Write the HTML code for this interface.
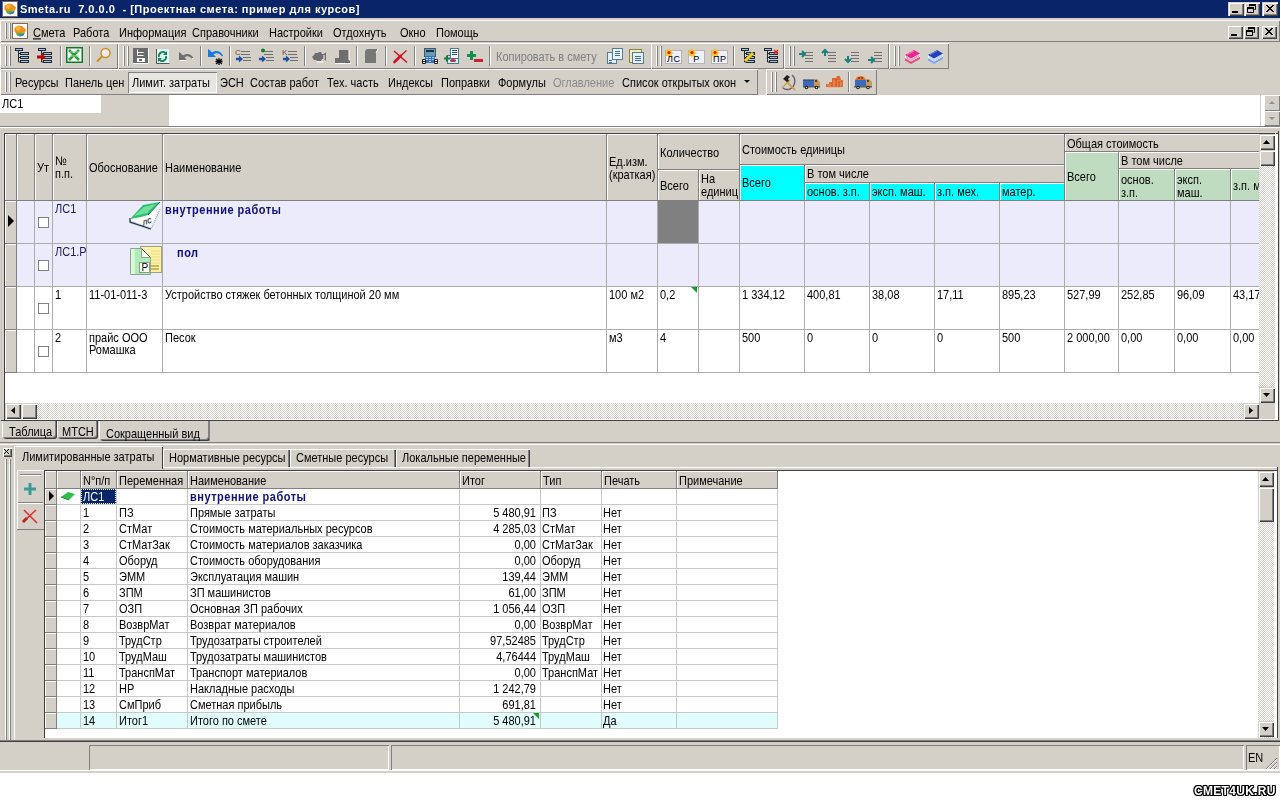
<!DOCTYPE html>
<html><head><meta charset="utf-8"><style>
html,body{margin:0;padding:0;width:1281px;height:801px;overflow:hidden;background:#fff}
body>div{position:absolute}
.t{white-space:nowrap;font:11px "Liberation Sans",sans-serif;color:#000;line-height:13px;transform-origin:0 0;transform:scaleY(1.12);will-change:transform}
svg{display:block}
</style></head><body>
<div style="left:0px;top:0px;width:1280px;height:773px;background:#D4D0C8"></div>
<div style="left:0px;top:0px;width:1280px;height:18px;background:#0A246A"></div>
<div class="t" style="left:20px;top:3px;color:#fff;font-weight:bold;font-size:11px;letter-spacing:0.5px;line-height:13px;transform:none">Smeta.ru&nbsp; 7.0.0.0&nbsp; - [Проектная смета: пример для курсов]</div>
<div style="left:2px;top:1px;width:16px;height:16px;"><svg width="16" height="16" viewBox="0 0 16 16"><rect x="0.5" y="0.5" width="15" height="15" fill="#fff" stroke="#806858"/><path d="M2.5 5L6 2.5L10 3L14 6.5L13 9.5L4 10.5L2.5 8z" fill="#f09018"/><path d="M4 4L7 3L9 5L7 8L4 7z" fill="#f8b040"/><path d="M4 10L13 9.5L12 12L8 13.5L5 12.5z" fill="#58b048"/><path d="M7 12L12 10.5L11.5 12.5L8 13.5z" fill="#4870c8"/></svg></div>
<div style="left:1228px;top:2px;width:16px;height:14px;background:#D4D0C8;box-shadow:inset 1px 1px 0 #D4D0C8, inset 2px 2px 0 #fff, inset -1px -1px 0 #404040, inset -2px -2px 0 #808080;"><svg width="16" height="14"><rect x="4" y="9" width="6" height="2" fill="#000"/></svg></div>
<div style="left:1244px;top:2px;width:16px;height:14px;background:#D4D0C8;box-shadow:inset 1px 1px 0 #D4D0C8, inset 2px 2px 0 #fff, inset -1px -1px 0 #404040, inset -2px -2px 0 #808080;"><svg width="16" height="14"><path d="M5.5 2.5h6v5h-1M5.5 2.5v2M3.5 5.5h6v5h-6z" fill="none" stroke="#000"/><rect x="5" y="2" width="7" height="2" fill="#000"/><rect x="3" y="5" width="7" height="2" fill="#000"/></svg></div>
<div style="left:1262px;top:2px;width:16px;height:14px;background:#D4D0C8;box-shadow:inset 1px 1px 0 #D4D0C8, inset 2px 2px 0 #fff, inset -1px -1px 0 #404040, inset -2px -2px 0 #808080;"><svg width="16" height="14"><path d="M4 3L11 10M11 3L4 10M5 3L12 10M12 3L5 10" stroke="#000" stroke-width="1"/></svg></div>
<div style="left:0px;top:18px;width:1280px;height:1px;background:#D4D0C8"></div>
<div style="left:0px;top:20px;width:1280px;height:22px;background:#D4D0C8;box-shadow:inset 1px 1px 0 #fff, inset -1px -1px 0 #808080;"></div>
<div style="left:5px;top:23px;width:1px;height:16px;background:#fff"></div>
<div style="left:6px;top:23px;width:1px;height:16px;background:#808080"></div>
<div style="left:9px;top:23px;width:1px;height:16px;background:#fff"></div>
<div style="left:10px;top:23px;width:1px;height:16px;background:#808080"></div>
<div style="left:12px;top:23px;width:16px;height:16px;"><svg width="16" height="16" viewBox="0 0 16 16"><rect x="0.5" y="0.5" width="15" height="15" fill="#fff" stroke="#806858"/><path d="M2.5 5L6 2.5L10 3L14 6.5L13 9.5L4 10.5L2.5 8z" fill="#f09018"/><path d="M4 4L7 3L9 5L7 8L4 7z" fill="#f8b040"/><path d="M4 10L13 9.5L12 12L8 13.5L5 12.5z" fill="#58b048"/><path d="M7 12L12 10.5L11.5 12.5L8 13.5z" fill="#4870c8"/></svg></div>
<div class="t" style="left:33px;top:26px;"><u>С</u>мета</div>
<div class="t" style="left:73px;top:26px;">Работа</div>
<div class="t" style="left:119px;top:26px;">Информация</div>
<div class="t" style="left:192px;top:26px;">Справочники</div>
<div class="t" style="left:269px;top:26px;">Настройки</div>
<div class="t" style="left:333px;top:26px;">Отдохнуть</div>
<div class="t" style="left:400px;top:26px;">Окно</div>
<div class="t" style="left:436px;top:26px;">Помощь</div>
<div style="left:1227px;top:25px;width:16px;height:14px;background:#D4D0C8;box-shadow:inset 1px 1px 0 #D4D0C8, inset 2px 2px 0 #fff, inset -1px -1px 0 #404040, inset -2px -2px 0 #808080;"><svg width="16" height="14"><rect x="4" y="9" width="6" height="2" fill="#000"/></svg></div>
<div style="left:1243px;top:25px;width:16px;height:14px;background:#D4D0C8;box-shadow:inset 1px 1px 0 #D4D0C8, inset 2px 2px 0 #fff, inset -1px -1px 0 #404040, inset -2px -2px 0 #808080;"><svg width="16" height="14"><path d="M5.5 2.5h6v5h-1M5.5 2.5v2M3.5 5.5h6v5h-6z" fill="none" stroke="#000"/><rect x="5" y="2" width="7" height="2" fill="#000"/><rect x="3" y="5" width="7" height="2" fill="#000"/></svg></div>
<div style="left:1261px;top:25px;width:16px;height:14px;background:#D4D0C8;box-shadow:inset 1px 1px 0 #D4D0C8, inset 2px 2px 0 #fff, inset -1px -1px 0 #404040, inset -2px -2px 0 #808080;"><svg width="16" height="14"><path d="M4 3L11 10M11 3L4 10M5 3L12 10M12 3L5 10" stroke="#000" stroke-width="1"/></svg></div>
<div style="left:0px;top:43px;width:118px;height:26px;background:#D4D0C8;box-shadow:inset 1px 1px 0 #fff, inset -1px -1px 0 #808080;"></div>
<div style="left:5px;top:46px;width:1px;height:20px;background:#fff"></div>
<div style="left:6px;top:46px;width:1px;height:20px;background:#808080"></div>
<div style="left:9px;top:46px;width:1px;height:20px;background:#fff"></div>
<div style="left:10px;top:46px;width:1px;height:20px;background:#808080"></div>
<div style="left:14px;top:47px;width:16px;height:16px"><svg width="16" height="16"><g fill="#a9c4d8" stroke="#1e2a3a"><rect x="1.5" y="1.5" width="7" height="2"/><rect x="6.5" y="5.5" width="8" height="2"/><rect x="6.5" y="9.5" width="8" height="2"/><rect x="6.5" y="13.5" width="8" height="2"/></g><path d="M4.5 4v11h2M4.5 6.5h2M4.5 10.5h2" fill="none" stroke="#1e2a3a"/></svg></div>
<div style="left:37px;top:47px;width:16px;height:16px"><svg width="16" height="16"><g fill="#a9c4d8" stroke="#1e2a3a"><rect x="1.5" y="1.5" width="7" height="2"/><rect x="6.5" y="5.5" width="8" height="2"/><rect x="6.5" y="9.5" width="8" height="2"/><rect x="6.5" y="13.5" width="8" height="2"/></g><path d="M4.5 4v11h2M4.5 6.5h2M4.5 10.5h2" fill="none" stroke="#1e2a3a"/><path d="M0 8.5h4v-3l4.5 4.5-4.5 4.5v-3H0z" fill="#b80808"/></svg></div>
<div style="left:60px;top:46px;width:1px;height:20px;background:#808080"></div>
<div style="left:61px;top:46px;width:1px;height:20px;background:#fff"></div>
<div style="left:66px;top:47px;width:17px;height:16px"><svg width="17" height="16"><rect x="0.5" y="0.5" width="16" height="15" fill="#fff" stroke="#0a7a2a" stroke-width="2"/><path d="M3 3l10 10M13 3L3 13" stroke="#2aa040" stroke-width="2.5"/><path d="M4 5h9M4 9h9" stroke="#9ad49a" stroke-width="1"/></svg></div>
<div style="left:89px;top:46px;width:1px;height:20px;background:#808080"></div>
<div style="left:90px;top:46px;width:1px;height:20px;background:#fff"></div>
<div style="left:95px;top:47px;width:17px;height:16px"><svg width="17" height="16"><circle cx="10.5" cy="6" r="4.5" fill="#fde8f0" stroke="#c89020" stroke-width="1.4"/><path d="M7.5 9L2 14.5" stroke="#c89020" stroke-width="2"/></svg></div>
<div style="left:118px;top:43px;width:534px;height:26px;background:#D4D0C8;box-shadow:inset 1px 1px 0 #fff, inset -1px -1px 0 #808080;"></div>
<div style="left:123px;top:46px;width:1px;height:20px;background:#fff"></div>
<div style="left:124px;top:46px;width:1px;height:20px;background:#808080"></div>
<div style="left:127px;top:46px;width:1px;height:20px;background:#fff"></div>
<div style="left:128px;top:46px;width:1px;height:20px;background:#808080"></div>
<div style="left:133px;top:48px;width:16px;height:16px"><svg width="16" height="16"><rect x="0" y="0" width="15" height="15" fill="#6a6a6a"/><path d="M15.5 0.5v15h-15" stroke="#fff" fill="none"/><path d="M4.5 1.5v6h6M4.5 4.5h6" stroke="#fff" fill="none"/><rect x="4" y="10" width="8" height="4" fill="#fff"/><rect x="6" y="11" width="3" height="2" fill="#6a6a6a"/></svg></div>
<div style="left:155px;top:48px;width:16px;height:16px"><svg width="16" height="16"><rect x="1" y="1" width="13" height="14" fill="#d8f8f0"/><path d="M1.5 1v14.5h13" stroke="#505a58" fill="none"/><path d="M4 9a4 4 0 0 1 6.5-4M11 8a4 4 0 0 1-6.5 4" fill="none" stroke="#18805a" stroke-width="1.8"/><path d="M12 3v4h-4zM3 14v-4h4z" fill="#18805a"/></svg></div>
<div style="left:178px;top:50px;width:17px;height:16px"><svg width="17" height="16"><path d="M1 2v8h8L6.5 7.5C9 5.5 12 6 14 9l1.5-1C13 3.5 8.5 3 5 5.5L2.5 3z" fill="#6e6e6e"/><path d="M2 10.5h7M14 9l1.5-1" stroke="#fff"/></svg></div>
<div style="left:200px;top:46px;width:1px;height:20px;background:#808080"></div>
<div style="left:201px;top:46px;width:1px;height:20px;background:#fff"></div>
<div style="left:207px;top:47px;width:18px;height:18px"><svg width="18" height="18"><path d="M1 2v8h8L6.5 7.5C9 5.5 12.5 6 15 9.5l1-1C13.5 3.5 8.5 3 5 5.5L2.5 3z" fill="#1a78e0"/><path d="M9 12l6 5M15 12l-6 5M12 11v7M8.5 14.5h7" stroke="#000" stroke-width="1.3"/></svg></div>
<div style="left:229px;top:46px;width:1px;height:20px;background:#808080"></div>
<div style="left:230px;top:46px;width:1px;height:20px;background:#fff"></div>
<div style="left:235px;top:47px;width:18px;height:16px"><svg width="18" height="16"><text x="0" y="8" font-size="8" fill="#6a5040" font-family="Liberation Sans">C</text><path d="M6 4.5h9M6 7.5h9M8 10.5h8M8 13.5h8" stroke="#707070"/><path d="M1 12h5" stroke="#1a50a8" stroke-width="2.5"/><path d="M4 8.5l4 3.5-4 3.5z" fill="#1a50a8"/></svg></div>
<div style="left:258px;top:47px;width:18px;height:16px"><svg width="18" height="16"><circle cx="5" cy="3.5" r="2" fill="#10802a"/><path d="M6 4.5h9M6 7.5h9M8 10.5h8M8 13.5h8" stroke="#707070"/><path d="M1 12h5" stroke="#1a50a8" stroke-width="2.5"/><path d="M4 8.5l4 3.5-4 3.5z" fill="#1a50a8"/></svg></div>
<div style="left:282px;top:47px;width:18px;height:16px"><svg width="18" height="16"><text x="0" y="8" font-size="8" fill="#6a5040" font-family="Liberation Sans">K</text><path d="M6 4.5h9M6 7.5h9M8 10.5h8M8 13.5h8" stroke="#707070"/><path d="M1 12h5" stroke="#1a50a8" stroke-width="2.5"/><path d="M4 8.5l4 3.5-4 3.5z" fill="#1a50a8"/></svg></div>
<div style="left:304px;top:46px;width:1px;height:20px;background:#808080"></div>
<div style="left:305px;top:46px;width:1px;height:20px;background:#fff"></div>
<div style="left:311px;top:48px;width:18px;height:16px"><svg width="18" height="16"><path d="M1 9l2-2 1-2h3l1-1h2l1 2h2l2-2v9l-2-2h-2l-1 2H6l-1-1H3z" fill="#6e6e6e"/><path d="M13 7v4" stroke="#fff"/><path d="M6 14h6" stroke="#fff"/></svg></div>
<div style="left:334px;top:48px;width:18px;height:16px"><svg width="18" height="16"><path d="M5 2h10v10h1v3H1v-5h4z" fill="#6e6e6e"/><path d="M15 2v10h1M1 15.5h16" stroke="#fff" fill="none"/></svg></div>
<div style="left:356px;top:46px;width:1px;height:20px;background:#808080"></div>
<div style="left:357px;top:46px;width:1px;height:20px;background:#fff"></div>
<div style="left:363px;top:48px;width:17px;height:16px"><svg width="17" height="16"><path d="M2 3l2-2h11l-2 4v10H2z" fill="#777"/><path d="M13 5l2-4" stroke="#fff"/></svg></div>
<div style="left:385px;top:46px;width:1px;height:20px;background:#808080"></div>
<div style="left:386px;top:46px;width:1px;height:20px;background:#fff"></div>
<div style="left:393px;top:48px;width:16px;height:16px"><svg width="16" height="16"><path d="M1 3L14 14.5" stroke="#e01020" stroke-width="1.6"/><path d="M10 14.5L14.5 14.5" stroke="#800010" stroke-width="0"/><path d="M13.5 2.5L7 8.5" stroke="#c01020" stroke-width="1.2"/><path d="M7.5 8L1.5 14" stroke="#d0101c" stroke-width="2.6" stroke-linecap="round"/></svg></div>
<div style="left:414px;top:46px;width:1px;height:20px;background:#808080"></div>
<div style="left:415px;top:46px;width:1px;height:20px;background:#fff"></div>
<div style="left:422px;top:48px;width:16px;height:16px"><svg width="16" height="16"><rect x="2.5" y="0.5" width="11" height="8" fill="#6a9ab0" stroke="#3a5a70"/><rect x="4" y="2" width="8" height="2" fill="#203038"/><rect x="3" y="8" width="10" height="7" fill="#3a70b8"/><g fill="#a8d0f8"><rect x="4" y="9" width="2" height="1"/><rect x="7" y="9" width="2" height="1"/><rect x="10" y="9" width="2" height="1"/><rect x="4" y="11" width="2" height="1"/><rect x="7" y="11" width="2" height="1"/><rect x="10" y="11" width="2" height="1"/><rect x="7" y="13" width="2" height="1"/></g><path d="M0.5 11.5h3v4h-3zM12.5 11.5h3v4h-3z" fill="#fff" stroke="#202020"/><path d="M1 13.5h2M13 13.5h2" stroke="#202020"/></svg></div>
<div style="left:444px;top:48px;width:16px;height:16px"><svg width="16" height="16"><rect x="3.5" y="7.5" width="11" height="8" fill="#d8f0f0" stroke="#3a8080"/><rect x="6.5" y="0.5" width="8" height="10" fill="#f4fbff" stroke="#4a7a98"/><path d="M8 2.5h5M8 4.5h5M8 6.5h5" stroke="#2a4a68"/><path d="M0 10.5h6M3 7.5v6" stroke="#108040" stroke-width="2.2"/><ellipse cx="9" cy="12.5" rx="3" ry="1.5" fill="#d02060"/></svg></div>
<div style="left:466px;top:48px;width:18px;height:16px"><svg width="18" height="16"><path d="M1 7.5h9M5.5 3v9" stroke="#10904a" stroke-width="3"/><rect x="8" y="11" width="9" height="3" fill="#d02030"/></svg></div>
<div style="left:489px;top:46px;width:1px;height:20px;background:#808080"></div>
<div style="left:490px;top:46px;width:1px;height:20px;background:#fff"></div>
<div class="t" style="left:496px;top:50px;color:#808080">Копировать в смету</div>
<div style="left:607px;top:48px;width:16px;height:16px"><svg width="16" height="16"><rect x="0.5" y="4.5" width="9" height="11" fill="#e0f0fa" stroke="#5a7a90"/><rect x="5.5" y="0.5" width="10" height="11" fill="#e8f6fc" stroke="#5a7a90"/><path d="M8 3.5h5M8 5.5h5M8 7.5h5M2 12.5h3M2 14.5h3" stroke="#4a6a80"/></svg></div>
<div style="left:629px;top:48px;width:16px;height:16px"><svg width="16" height="16"><rect x="0.5" y="1.5" width="12" height="13" fill="#f4ecb0" stroke="#8a8050"/><rect x="3.5" y="4.5" width="11" height="11" fill="#e0f0fa" stroke="#5a7a90"/><path d="M6 8.5h6M6 10.5h6M6 12.5h6" stroke="#4a6a80"/></svg></div>
<div style="left:651px;top:43px;width:133px;height:26px;background:#D4D0C8;box-shadow:inset 1px 1px 0 #fff, inset -1px -1px 0 #808080;"></div>
<div style="left:656px;top:46px;width:1px;height:20px;background:#fff"></div>
<div style="left:657px;top:46px;width:1px;height:20px;background:#808080"></div>
<div style="left:660px;top:46px;width:1px;height:20px;background:#fff"></div>
<div style="left:661px;top:46px;width:1px;height:20px;background:#808080"></div>
<div style="left:665px;top:48px;width:17px;height:16px"><svg width="17" height="16"><rect x="0.5" y="2.5" width="16" height="13" fill="#eef0fa" stroke="#b8b0b8"/><path d="M4 0l1 2.5 2.5-1-1 2.5 2.5 1-2.5 1 1 2.5-2.5-1-1 2.5-1-2.5-2.5 1 1-2.5-2.5-1 2.5-1-1-2.5 2.5 1z" fill="#f8c020"/><circle cx="4" cy="4.5" r="1.6" fill="#e02010"/><text x="2.0999999999999996" y="14" font-size="9" font-family="Liberation Sans" fill="#000" textLength="12.8">ЛС</text></svg></div>
<div style="left:688px;top:48px;width:17px;height:16px"><svg width="17" height="16"><rect x="0.5" y="2.5" width="16" height="13" fill="#eef0fa" stroke="#b8b0b8"/><path d="M4 0l1 2.5 2.5-1-1 2.5 2.5 1-2.5 1 1 2.5-2.5-1-1 2.5-1-2.5-2.5 1 1-2.5-2.5-1 2.5-1-1-2.5 2.5 1z" fill="#f8c020"/><circle cx="4" cy="4.5" r="1.6" fill="#e02010"/><text x="5.3" y="14" font-size="9" font-family="Liberation Sans" fill="#000" textLength="6.4">Р</text></svg></div>
<div style="left:711px;top:48px;width:17px;height:16px"><svg width="17" height="16"><rect x="0.5" y="2.5" width="16" height="13" fill="#eef0fa" stroke="#b8b0b8"/><path d="M4 0l1 2.5 2.5-1-1 2.5 2.5 1-2.5 1 1 2.5-2.5-1-1 2.5-1-2.5-2.5 1 1-2.5-2.5-1 2.5-1-1-2.5 2.5 1z" fill="#f8c020"/><circle cx="4" cy="4.5" r="1.6" fill="#e02010"/><text x="2.0999999999999996" y="14" font-size="9" font-family="Liberation Sans" fill="#000" textLength="12.8">ПР</text></svg></div>
<div style="left:733px;top:46px;width:1px;height:20px;background:#808080"></div>
<div style="left:734px;top:46px;width:1px;height:20px;background:#fff"></div>
<div style="left:740px;top:47px;width:16px;height:16px"><svg width="16" height="16"><g fill="#a9c4d8" stroke="#1e2a3a"><rect x="1.5" y="1.5" width="7" height="2"/><rect x="6.5" y="5.5" width="8" height="2"/><rect x="6.5" y="9.5" width="8" height="2"/><rect x="6.5" y="13.5" width="8" height="2"/></g><path d="M4.5 4v11h2M4.5 6.5h2M4.5 10.5h2" fill="none" stroke="#1e2a3a"/><path d="M4 13l8-8 2 2-8 8z" fill="#f0d030" stroke="#b09010"/></svg></div>
<div style="left:763px;top:47px;width:16px;height:16px"><svg width="16" height="16"><g fill="#a9c4d8" stroke="#1e2a3a"><rect x="1.5" y="1.5" width="7" height="2"/><rect x="6.5" y="5.5" width="8" height="2"/><rect x="6.5" y="9.5" width="8" height="2"/><rect x="6.5" y="13.5" width="8" height="2"/></g><path d="M4.5 4v11h2M4.5 6.5h2M4.5 10.5h2" fill="none" stroke="#1e2a3a"/><path d="M11 3l4 4M15 3l-4 4" stroke="#e02020" stroke-width="1.5"/></svg></div>
<div style="left:784px;top:43px;width:105px;height:26px;background:#D4D0C8;box-shadow:inset 1px 1px 0 #fff, inset -1px -1px 0 #808080;"></div>
<div style="left:789px;top:46px;width:1px;height:20px;background:#fff"></div>
<div style="left:790px;top:46px;width:1px;height:20px;background:#808080"></div>
<div style="left:793px;top:46px;width:1px;height:20px;background:#fff"></div>
<div style="left:794px;top:46px;width:1px;height:20px;background:#808080"></div>
<div style="left:798px;top:48px;width:17px;height:16px"><svg width="17" height="16"><path d="M7 4.5h8M7 7.5h8M7 10.5h8M7 13.5h8" stroke="#707070"/><path d="M1 6h5M4 3l3 3-3 3" stroke="#1a8080" stroke-width="2" fill="none"/></svg></div>
<div style="left:821px;top:48px;width:17px;height:16px"><svg width="17" height="16"><path d="M7 4.5h8M7 7.5h8M7 10.5h8M7 13.5h8" stroke="#707070"/><path d="M4 2v6M1 5l3-3 3 3" stroke="#1a8080" stroke-width="2" fill="none"/></svg></div>
<div style="left:844px;top:48px;width:17px;height:16px"><svg width="17" height="16"><path d="M7 4.5h8M7 7.5h8M7 10.5h8M7 13.5h8" stroke="#707070"/><path d="M4 8v6M1 11l3 3 3-3" stroke="#1a8080" stroke-width="2" fill="none"/></svg></div>
<div style="left:867px;top:48px;width:17px;height:16px"><svg width="17" height="16"><path d="M7 4.5h8M7 7.5h8M7 10.5h8M7 13.5h8" stroke="#707070"/><path d="M1 12h5M4 9l3 3-3 3" stroke="#1a8080" stroke-width="2" fill="none"/></svg></div>
<div style="left:889px;top:43px;width:60px;height:26px;background:#D4D0C8;box-shadow:inset 1px 1px 0 #fff, inset -1px -1px 0 #808080;"></div>
<div style="left:894px;top:46px;width:1px;height:20px;background:#fff"></div>
<div style="left:895px;top:46px;width:1px;height:20px;background:#808080"></div>
<div style="left:898px;top:46px;width:1px;height:20px;background:#fff"></div>
<div style="left:899px;top:46px;width:1px;height:20px;background:#808080"></div>
<div style="left:904px;top:48px;width:17px;height:16px"><svg width="17" height="16"><path d="M1 10L7 13.5L16 8.5V11L7 16L1 12.5z" fill="#e05080"/><path d="M1 7L7 10.5L16 5.5V8.5L7 13.5L1 10z" fill="#fff"/><path d="M2 8.5L7 11.5L15.5 6.8M2 9.8L7 12.6L15.5 7.9" stroke="#e05080" stroke-width="0.6" fill="none"/><path d="M1 7L10 2L16 5.5L7 10.5z" fill="#e82890"/><path d="M3 6.5L10 3" stroke="#fff" stroke-opacity="0.4"/></svg></div>
<div style="left:927px;top:48px;width:17px;height:16px"><svg width="17" height="16"><path d="M1 10L7 13.5L16 8.5V11L7 16L1 12.5z" fill="#80a8e8"/><path d="M1 7L7 10.5L16 5.5V8.5L7 13.5L1 10z" fill="#fff"/><path d="M2 8.5L7 11.5L15.5 6.8M2 9.8L7 12.6L15.5 7.9" stroke="#80a8e8" stroke-width="0.6" fill="none"/><path d="M1 7L10 2L16 5.5L7 10.5z" fill="#2040c0"/><path d="M3 6.5L10 3" stroke="#fff" stroke-opacity="0.4"/></svg></div>
<div style="left:0px;top:69px;width:758px;height:26px;background:#D4D0C8;box-shadow:inset 1px 1px 0 #fff, inset -1px -1px 0 #808080;"></div>
<div style="left:5px;top:72px;width:1px;height:20px;background:#fff"></div>
<div style="left:6px;top:72px;width:1px;height:20px;background:#808080"></div>
<div style="left:9px;top:72px;width:1px;height:20px;background:#fff"></div>
<div style="left:10px;top:72px;width:1px;height:20px;background:#808080"></div>
<div style="left:128px;top:72px;width:89px;height:21px;background:#e8e6e2;box-shadow:inset 1px 1px 0 #808080, inset -1px -1px 0 #fff"></div>
<div class="t" style="left:15px;top:76px;">Ресурсы</div>
<div class="t" style="left:65px;top:76px;">Панель цен</div>
<div class="t" style="left:132px;top:76px;">Лимит. затраты</div>
<div class="t" style="left:220px;top:76px;">ЭСН</div>
<div class="t" style="left:250px;top:76px;">Состав работ</div>
<div class="t" style="left:327px;top:76px;">Тех. часть</div>
<div class="t" style="left:388px;top:76px;">Индексы</div>
<div class="t" style="left:441px;top:76px;">Поправки</div>
<div class="t" style="left:498px;top:76px;">Формулы</div>
<div class="t" style="left:553px;top:76px;color:#8a8a8a">Оглавление</div>
<div class="t" style="left:622px;top:76px;">Список открытых окон</div>
<div style="left:744px;top:80px;width:0;height:0;border-left:3px solid transparent;border-right:3px solid transparent;border-top:3px solid #000"></div>
<div style="left:766px;top:69px;width:111px;height:26px;background:#D4D0C8;box-shadow:inset 1px 1px 0 #fff, inset -1px -1px 0 #808080;"></div>
<div style="left:771px;top:72px;width:1px;height:20px;background:#fff"></div>
<div style="left:772px;top:72px;width:1px;height:20px;background:#808080"></div>
<div style="left:775px;top:72px;width:1px;height:20px;background:#fff"></div>
<div style="left:776px;top:72px;width:1px;height:20px;background:#808080"></div>
<div style="left:780px;top:73px;width:17px;height:18px"><svg width="17" height="18"><path d="M12 2c4 3 4 11-2 14-3 1-6 0-7-1" fill="none" stroke="#6a6080" stroke-width="1.5"/><path d="M2 15L10 7" stroke="#c8a050" stroke-width="1.5"/><path d="M6 8l9 9" stroke="#c8a050" stroke-width="1.8"/><path d="M3 6l4-4 3 2-2 2 1 2-2 1z" fill="#202020"/></svg></div>
<div style="left:803px;top:74px;width:18px;height:16px"><svg width="18" height="16"><rect x="0" y="6" width="11" height="6" fill="#3a6ab8"/><path d="M0 6h11" stroke="#1a3a70"/><path d="M11 5h3l3 3v4h-6z" fill="#c89858"/><rect x="12" y="6" width="2" height="2" fill="#404040"/><rect x="0" y="12" width="17" height="1.5" fill="#606060"/><circle cx="3.5" cy="13.5" r="1.8" fill="#202020"/><circle cx="13.5" cy="13.5" r="1.8" fill="#202020"/><circle cx="3.5" cy="13.5" r="0.7" fill="#fff"/><circle cx="13.5" cy="13.5" r="0.7" fill="#fff"/></svg></div>
<div style="left:826px;top:73px;width:17px;height:16px"><svg width="17" height="16"><path d="M0 14v-3h3v-2h3V5h4l1-2h3l1 4h2v7z" fill="#e06830"/><path d="M1 12h15M4 10h12M7 8h8M2 14h13" stroke="#f8a070" stroke-width="0.8"/><path d="M6 9v5M10 6v8M13 8v6" stroke="#b84818" stroke-width="0.8"/></svg></div>
<div style="left:848px;top:72px;width:1px;height:20px;background:#808080"></div>
<div style="left:849px;top:72px;width:1px;height:20px;background:#fff"></div>
<div style="left:854px;top:73px;width:19px;height:17px"><svg width="19" height="17"><path d="M1 7l2-3 4-1 3 1 2 3z" fill="#e07030"/><circle cx="5" cy="5" r="1" fill="#803010"/><circle cx="8" cy="5" r="1" fill="#803010"/><rect x="1" y="7" width="11" height="6" fill="#3a6ab8"/><path d="M12 6h3l3 3v4h-6z" fill="#c89858"/><rect x="13" y="7" width="2" height="2" fill="#404040"/><rect x="0" y="13" width="18" height="1.5" fill="#606060"/><circle cx="4" cy="14.5" r="1.8" fill="#202020"/><circle cx="14" cy="14.5" r="1.8" fill="#202020"/><circle cx="4" cy="14.5" r="0.7" fill="#fff"/><circle cx="14" cy="14.5" r="0.7" fill="#fff"/></svg></div>
<div style="left:0px;top:95px;width:1280px;height:32px;background:#fff"></div>
<div style="left:101px;top:95px;width:68px;height:31px;background:#D4D0C8"></div>
<div style="left:0px;top:113px;width:101px;height:13px;background:#D4D0C8"></div>
<div class="t" style="left:2px;top:97px;">ЛС1</div>
<div style="left:1260px;top:95px;width:1px;height:31px;background:#d0d0d0"></div>
<div style="left:1264px;top:95px;width:16px;height:16px;background:#D4D0C8;box-shadow:inset 1px 1px 0 #fff, inset -1px -1px 0 #808080;"><svg width="16" height="16"><path d="M5 9h6l-3-3z" fill="#909090"/></svg></div>
<div style="left:1264px;top:111px;width:16px;height:15px;background:#D4D0C8;box-shadow:inset 1px 1px 0 #fff, inset -1px -1px 0 #808080;"><svg width="16" height="15"><path d="M5 6h6l-3 3z" fill="#909090"/></svg></div>
<div style="left:0px;top:126px;width:1280px;height:1px;background:#808080"></div>
<div style="left:0px;top:127px;width:1280px;height:1px;background:#fff"></div>
<div style="left:1px;top:130px;width:1278px;height:291px;box-shadow:inset 1px 1px 0 #c8c4bc, inset -1px -1px 0 #404040"></div>
<div style="left:4px;top:133px;width:1274px;height:287px;background:#fff"></div>
<div style="left:4px;top:133px;width:1px;height:287px;background:#404040"></div>
<div style="left:4px;top:133px;width:1274px;height:1px;background:#404040"></div>
<div style="left:1275px;top:133px;width:1px;height:287px;background:#fff"></div>
<div style="left:5px;top:134px;width:12px;height:67px;background:#D4D0C8;box-shadow:inset 1px 1px 0 #fff;border-right:1px solid #808080;border-bottom:1px solid #808080;box-sizing:border-box"></div>
<div style="left:17px;top:134px;width:18px;height:67px;background:#D4D0C8;box-shadow:inset 1px 1px 0 #fff;border-right:1px solid #808080;border-bottom:1px solid #808080;box-sizing:border-box"></div>
<div style="left:35px;top:134px;width:18px;height:67px;background:#D4D0C8;box-shadow:inset 1px 1px 0 #fff;border-right:1px solid #808080;border-bottom:1px solid #808080;box-sizing:border-box"></div>
<div class="t" style="left:37px;top:161px;">Ут</div>
<div style="left:53px;top:134px;width:34px;height:67px;background:#D4D0C8;box-shadow:inset 1px 1px 0 #fff;border-right:1px solid #808080;border-bottom:1px solid #808080;box-sizing:border-box"></div>
<div class="t" style="left:55px;top:154px;">№</div>
<div class="t" style="left:55px;top:167px;">п.п.</div>
<div style="left:87px;top:134px;width:76px;height:67px;background:#D4D0C8;box-shadow:inset 1px 1px 0 #fff;border-right:1px solid #808080;border-bottom:1px solid #808080;box-sizing:border-box"></div>
<div class="t" style="left:89px;top:161px;">Обоснование</div>
<div style="left:163px;top:134px;width:444px;height:67px;background:#D4D0C8;box-shadow:inset 1px 1px 0 #fff;border-right:1px solid #808080;border-bottom:1px solid #808080;box-sizing:border-box"></div>
<div class="t" style="left:165px;top:161px;">Наименование</div>
<div style="left:607px;top:134px;width:51px;height:67px;background:#D4D0C8;box-shadow:inset 1px 1px 0 #fff;border-right:1px solid #808080;border-bottom:1px solid #808080;box-sizing:border-box"></div>
<div class="t" style="left:609px;top:155px;">Ед.изм.</div>
<div class="t" style="left:609px;top:168px;">(краткая)</div>
<div style="left:658px;top:134px;width:82px;height:36px;background:#D4D0C8;box-shadow:inset 1px 1px 0 #fff;border-right:1px solid #808080;border-bottom:1px solid #808080;box-sizing:border-box"></div>
<div class="t" style="left:660px;top:146px;">Количество</div>
<div style="left:658px;top:170px;width:41px;height:31px;background:#D4D0C8;box-shadow:inset 1px 1px 0 #fff;border-right:1px solid #808080;border-bottom:1px solid #808080;box-sizing:border-box"></div>
<div class="t" style="left:660px;top:179px;">Всего</div>
<div style="left:699px;top:170px;width:41px;height:31px;background:#D4D0C8;box-shadow:inset 1px 1px 0 #fff;border-right:1px solid #808080;border-bottom:1px solid #808080;box-sizing:border-box"></div>
<div class="t" style="left:701px;top:172px;">На</div>
<div class="t" style="left:701px;top:185px;">единиц</div>
<div style="left:740px;top:134px;width:325px;height:31px;background:#D4D0C8;box-shadow:inset 1px 1px 0 #fff;border-right:1px solid #808080;border-bottom:1px solid #808080;box-sizing:border-box"></div>
<div class="t" style="left:742px;top:143px;">Стоимость единицы</div>
<div style="left:740px;top:165px;width:65px;height:36px;background:#00FFFF;box-shadow:inset 1px 1px 0 #fff;border-right:1px solid #808080;border-bottom:1px solid #808080;box-sizing:border-box"></div>
<div class="t" style="left:742px;top:176px;">Всего</div>
<div style="left:805px;top:165px;width:260px;height:18px;background:#D4D0C8;box-shadow:inset 1px 1px 0 #fff;border-right:1px solid #808080;border-bottom:1px solid #808080;box-sizing:border-box"></div>
<div class="t" style="left:807px;top:167px;">В том числе</div>
<div style="left:805px;top:183px;width:65px;height:18px;background:#00FFFF;box-shadow:inset 1px 1px 0 #fff;border-right:1px solid #808080;border-bottom:1px solid #808080;box-sizing:border-box"></div>
<div class="t" style="left:807px;top:185px;">основ. з.п.</div>
<div style="left:870px;top:183px;width:65px;height:18px;background:#00FFFF;box-shadow:inset 1px 1px 0 #fff;border-right:1px solid #808080;border-bottom:1px solid #808080;box-sizing:border-box"></div>
<div class="t" style="left:872px;top:185px;">эксп. маш.</div>
<div style="left:935px;top:183px;width:65px;height:18px;background:#00FFFF;box-shadow:inset 1px 1px 0 #fff;border-right:1px solid #808080;border-bottom:1px solid #808080;box-sizing:border-box"></div>
<div class="t" style="left:937px;top:185px;">з.п. мех.</div>
<div style="left:1000px;top:183px;width:65px;height:18px;background:#00FFFF;box-shadow:inset 1px 1px 0 #fff;border-right:1px solid #808080;border-bottom:1px solid #808080;box-sizing:border-box"></div>
<div class="t" style="left:1002px;top:185px;">матер.</div>
<div style="left:1065px;top:134px;width:195px;height:18px;background:#D4D0C8;box-shadow:inset 1px 1px 0 #fff;border-right:1px solid #808080;border-bottom:1px solid #808080;box-sizing:border-box"></div>
<div class="t" style="left:1067px;top:137px;">Общая стоимость</div>
<div style="left:1065px;top:152px;width:54px;height:49px;background:#C0DCC0;box-shadow:inset 1px 1px 0 #fff;border-right:1px solid #808080;border-bottom:1px solid #808080;box-sizing:border-box"></div>
<div class="t" style="left:1067px;top:170px;">Всего</div>
<div style="left:1119px;top:152px;width:141px;height:17px;background:#D4D0C8;box-shadow:inset 1px 1px 0 #fff;border-right:1px solid #808080;border-bottom:1px solid #808080;box-sizing:border-box"></div>
<div class="t" style="left:1121px;top:154px;">В том числе</div>
<div style="left:1119px;top:169px;width:56px;height:32px;background:#C0DCC0;box-shadow:inset 1px 1px 0 #fff;border-right:1px solid #808080;border-bottom:1px solid #808080;box-sizing:border-box"></div>
<div class="t" style="left:1121px;top:173px;">основ.</div>
<div class="t" style="left:1121px;top:186px;">з.п.</div>
<div style="left:1175px;top:169px;width:56px;height:32px;background:#C0DCC0;box-shadow:inset 1px 1px 0 #fff;border-right:1px solid #808080;border-bottom:1px solid #808080;box-sizing:border-box"></div>
<div class="t" style="left:1177px;top:173px;">эксп.</div>
<div class="t" style="left:1177px;top:186px;">маш.</div>
<div style="left:1231px;top:169px;width:29px;height:32px;background:#C0DCC0;box-shadow:inset 1px 1px 0 #fff;border-right:1px solid #808080;border-bottom:1px solid #808080;box-sizing:border-box"></div>
<div class="t" style="left:1233px;top:179px;">з.п. мех.</div>
<div style="left:17px;top:201px;width:1242px;height:42px;background:#EBEBFB"></div>
<div style="left:5px;top:243px;width:1254px;height:1px;background:#ACACAC"></div>
<div style="left:5px;top:201px;width:11px;height:42px;background:#D4D0C8;box-shadow:inset 1px 1px 0 #fff"></div>
<div style="left:5px;top:243px;width:12px;height:1px;background:#808080"></div>
<div style="left:34px;top:201px;width:1px;height:42px;background:#ACACAC"></div>
<div style="left:52px;top:201px;width:1px;height:42px;background:#ACACAC"></div>
<div style="left:86px;top:201px;width:1px;height:42px;background:#ACACAC"></div>
<div style="left:162px;top:201px;width:1px;height:42px;background:#ACACAC"></div>
<div style="left:606px;top:201px;width:1px;height:42px;background:#ACACAC"></div>
<div style="left:657px;top:201px;width:1px;height:42px;background:#ACACAC"></div>
<div style="left:698px;top:201px;width:1px;height:42px;background:#ACACAC"></div>
<div style="left:739px;top:201px;width:1px;height:42px;background:#ACACAC"></div>
<div style="left:804px;top:201px;width:1px;height:42px;background:#ACACAC"></div>
<div style="left:869px;top:201px;width:1px;height:42px;background:#ACACAC"></div>
<div style="left:934px;top:201px;width:1px;height:42px;background:#ACACAC"></div>
<div style="left:999px;top:201px;width:1px;height:42px;background:#ACACAC"></div>
<div style="left:1064px;top:201px;width:1px;height:42px;background:#ACACAC"></div>
<div style="left:1118px;top:201px;width:1px;height:42px;background:#ACACAC"></div>
<div style="left:1174px;top:201px;width:1px;height:42px;background:#ACACAC"></div>
<div style="left:1230px;top:201px;width:1px;height:42px;background:#ACACAC"></div>
<div style="left:16px;top:201px;width:1px;height:43px;background:#808080"></div>
<div style="left:38px;top:217px;width:11px;height:11px;background:#fff;border:1px solid #808080;box-sizing:border-box"></div>
<div class="t" style="left:55px;top:203px;color:#1a1a60;line-height:11px">ЛС1</div>
<div style="left:17px;top:244px;width:1242px;height:42px;background:#EBEBFB"></div>
<div style="left:5px;top:286px;width:1254px;height:1px;background:#ACACAC"></div>
<div style="left:5px;top:244px;width:11px;height:42px;background:#D4D0C8;box-shadow:inset 1px 1px 0 #fff"></div>
<div style="left:5px;top:286px;width:12px;height:1px;background:#808080"></div>
<div style="left:34px;top:244px;width:1px;height:42px;background:#ACACAC"></div>
<div style="left:52px;top:244px;width:1px;height:42px;background:#ACACAC"></div>
<div style="left:86px;top:244px;width:1px;height:42px;background:#ACACAC"></div>
<div style="left:162px;top:244px;width:1px;height:42px;background:#ACACAC"></div>
<div style="left:606px;top:244px;width:1px;height:42px;background:#ACACAC"></div>
<div style="left:657px;top:244px;width:1px;height:42px;background:#ACACAC"></div>
<div style="left:698px;top:244px;width:1px;height:42px;background:#ACACAC"></div>
<div style="left:739px;top:244px;width:1px;height:42px;background:#ACACAC"></div>
<div style="left:804px;top:244px;width:1px;height:42px;background:#ACACAC"></div>
<div style="left:869px;top:244px;width:1px;height:42px;background:#ACACAC"></div>
<div style="left:934px;top:244px;width:1px;height:42px;background:#ACACAC"></div>
<div style="left:999px;top:244px;width:1px;height:42px;background:#ACACAC"></div>
<div style="left:1064px;top:244px;width:1px;height:42px;background:#ACACAC"></div>
<div style="left:1118px;top:244px;width:1px;height:42px;background:#ACACAC"></div>
<div style="left:1174px;top:244px;width:1px;height:42px;background:#ACACAC"></div>
<div style="left:1230px;top:244px;width:1px;height:42px;background:#ACACAC"></div>
<div style="left:16px;top:244px;width:1px;height:43px;background:#808080"></div>
<div style="left:38px;top:260px;width:11px;height:11px;background:#fff;border:1px solid #808080;box-sizing:border-box"></div>
<div class="t" style="left:55px;top:246px;color:#1a1a60;line-height:11px">ЛС1.Р</div>
<div style="left:17px;top:287px;width:1242px;height:42px;background:#fff"></div>
<div style="left:5px;top:329px;width:1254px;height:1px;background:#ACACAC"></div>
<div style="left:5px;top:287px;width:11px;height:42px;background:#D4D0C8;box-shadow:inset 1px 1px 0 #fff"></div>
<div style="left:5px;top:329px;width:12px;height:1px;background:#808080"></div>
<div style="left:34px;top:287px;width:1px;height:42px;background:#ACACAC"></div>
<div style="left:52px;top:287px;width:1px;height:42px;background:#ACACAC"></div>
<div style="left:86px;top:287px;width:1px;height:42px;background:#ACACAC"></div>
<div style="left:162px;top:287px;width:1px;height:42px;background:#ACACAC"></div>
<div style="left:606px;top:287px;width:1px;height:42px;background:#ACACAC"></div>
<div style="left:657px;top:287px;width:1px;height:42px;background:#ACACAC"></div>
<div style="left:698px;top:287px;width:1px;height:42px;background:#ACACAC"></div>
<div style="left:739px;top:287px;width:1px;height:42px;background:#ACACAC"></div>
<div style="left:804px;top:287px;width:1px;height:42px;background:#ACACAC"></div>
<div style="left:869px;top:287px;width:1px;height:42px;background:#ACACAC"></div>
<div style="left:934px;top:287px;width:1px;height:42px;background:#ACACAC"></div>
<div style="left:999px;top:287px;width:1px;height:42px;background:#ACACAC"></div>
<div style="left:1064px;top:287px;width:1px;height:42px;background:#ACACAC"></div>
<div style="left:1118px;top:287px;width:1px;height:42px;background:#ACACAC"></div>
<div style="left:1174px;top:287px;width:1px;height:42px;background:#ACACAC"></div>
<div style="left:1230px;top:287px;width:1px;height:42px;background:#ACACAC"></div>
<div style="left:16px;top:287px;width:1px;height:43px;background:#808080"></div>
<div style="left:38px;top:303px;width:11px;height:11px;background:#fff;border:1px solid #808080;box-sizing:border-box"></div>
<div class="t" style="left:55px;top:289px;color:#000;line-height:11px">1</div>
<div class="t" style="left:89px;top:289px;color:#000;line-height:11px">11-01-011-3</div>
<div class="t" style="left:165px;top:289px;color:#000;line-height:11px">Устройство стяжек бетонных толщиной 20 мм</div>
<div class="t" style="left:609px;top:289px;color:#000;line-height:11px">100 м2</div>
<div class="t" style="left:660px;top:289px;color:#000;line-height:11px">0,2</div>
<div class="t" style="left:742px;top:289px;color:#000;line-height:11px">1 334,12</div>
<div class="t" style="left:807px;top:289px;color:#000;line-height:11px">400,81</div>
<div class="t" style="left:872px;top:289px;color:#000;line-height:11px">38,08</div>
<div class="t" style="left:937px;top:289px;color:#000;line-height:11px">17,11</div>
<div class="t" style="left:1002px;top:289px;color:#000;line-height:11px">895,23</div>
<div class="t" style="left:1067px;top:289px;color:#000;line-height:11px">527,99</div>
<div class="t" style="left:1121px;top:289px;color:#000;line-height:11px">252,85</div>
<div class="t" style="left:1177px;top:289px;color:#000;line-height:11px">96,09</div>
<div class="t" style="left:1233px;top:289px;color:#000;line-height:11px">43,17</div>
<div style="left:17px;top:330px;width:1242px;height:42px;background:#fff"></div>
<div style="left:5px;top:372px;width:1254px;height:1px;background:#ACACAC"></div>
<div style="left:5px;top:330px;width:11px;height:42px;background:#D4D0C8;box-shadow:inset 1px 1px 0 #fff"></div>
<div style="left:5px;top:372px;width:12px;height:1px;background:#808080"></div>
<div style="left:34px;top:330px;width:1px;height:42px;background:#ACACAC"></div>
<div style="left:52px;top:330px;width:1px;height:42px;background:#ACACAC"></div>
<div style="left:86px;top:330px;width:1px;height:42px;background:#ACACAC"></div>
<div style="left:162px;top:330px;width:1px;height:42px;background:#ACACAC"></div>
<div style="left:606px;top:330px;width:1px;height:42px;background:#ACACAC"></div>
<div style="left:657px;top:330px;width:1px;height:42px;background:#ACACAC"></div>
<div style="left:698px;top:330px;width:1px;height:42px;background:#ACACAC"></div>
<div style="left:739px;top:330px;width:1px;height:42px;background:#ACACAC"></div>
<div style="left:804px;top:330px;width:1px;height:42px;background:#ACACAC"></div>
<div style="left:869px;top:330px;width:1px;height:42px;background:#ACACAC"></div>
<div style="left:934px;top:330px;width:1px;height:42px;background:#ACACAC"></div>
<div style="left:999px;top:330px;width:1px;height:42px;background:#ACACAC"></div>
<div style="left:1064px;top:330px;width:1px;height:42px;background:#ACACAC"></div>
<div style="left:1118px;top:330px;width:1px;height:42px;background:#ACACAC"></div>
<div style="left:1174px;top:330px;width:1px;height:42px;background:#ACACAC"></div>
<div style="left:1230px;top:330px;width:1px;height:42px;background:#ACACAC"></div>
<div style="left:16px;top:330px;width:1px;height:43px;background:#808080"></div>
<div style="left:38px;top:346px;width:11px;height:11px;background:#fff;border:1px solid #808080;box-sizing:border-box"></div>
<div class="t" style="left:55px;top:332px;color:#000;line-height:11px">2</div>
<div class="t" style="left:89px;top:332px;color:#000;line-height:11px">прайс ООО<br>Ромашка</div>
<div class="t" style="left:165px;top:332px;color:#000;line-height:11px">Песок</div>
<div class="t" style="left:609px;top:332px;color:#000;line-height:11px">м3</div>
<div class="t" style="left:660px;top:332px;color:#000;line-height:11px">4</div>
<div class="t" style="left:742px;top:332px;color:#000;line-height:11px">500</div>
<div class="t" style="left:807px;top:332px;color:#000;line-height:11px">0</div>
<div class="t" style="left:872px;top:332px;color:#000;line-height:11px">0</div>
<div class="t" style="left:937px;top:332px;color:#000;line-height:11px">0</div>
<div class="t" style="left:1002px;top:332px;color:#000;line-height:11px">500</div>
<div class="t" style="left:1067px;top:332px;color:#000;line-height:11px">2 000,00</div>
<div class="t" style="left:1121px;top:332px;color:#000;line-height:11px">0,00</div>
<div class="t" style="left:1177px;top:332px;color:#000;line-height:11px">0,00</div>
<div class="t" style="left:1233px;top:332px;color:#000;line-height:11px">0,00</div>
<div style="left:658px;top:201px;width:40px;height:42px;background:#808080"></div>
<div style="left:691px;top:287px;width:0;height:0;border-left:6px solid transparent;border-top:6px solid #10a030"></div>
<div class="t" style="left:165px;top:203px;color:#10107a;font-weight:bold;letter-spacing:0.5px">внутренние работы</div>
<div class="t" style="left:177px;top:246px;color:#10107a;font-weight:bold;letter-spacing:0.5px">пол</div>
<div style="left:8px;top:215px;width:0;height:0;border-top:6px solid transparent;border-bottom:6px solid transparent;border-left:6px solid #000"></div>
<div style="left:129px;top:201px;width:33px;height:30px"><svg width="33" height="30" viewBox="0 0 33 30"><path d="M1 17L20 13L31 8L22 28L1 21Z" fill="#fff"/><path d="M31 8L22 28" stroke="#9ab0c8" stroke-width="1.5" stroke-dasharray="1 1"/><path d="M1 21L22 28" stroke="#c8d8e8" stroke-width="3"/><path d="M1 17V21L22 28" fill="none" stroke="#203040" stroke-width="1.3"/><path d="M1 18L14 4L31 1L19 14L12 16Z" fill="#30c070"/><path d="M5 15L15 6L27 3L18 12Z" fill="#70e0a0"/><path d="M31 1L19 14" stroke="#208050" stroke-width="1"/><text x="13" y="23" font-size="9" font-family="Liberation Sans" font-style="italic" fill="#000" transform="rotate(-18 18 20)">лс</text></svg></div>
<div style="left:129px;top:245px;width:34px;height:32px"><svg width="34" height="32" viewBox="0 0 34 32"><rect x="11.5" y="1.5" width="21" height="26" fill="#fbf3a0" stroke="#a0a080"/><rect x="12" y="2" width="8" height="25" fill="#f8f0c0"/><path d="M22 6h9M22 9h9M22 12h9M22 15h9M22 18h9" stroke="#f0d890"/><path d="M22 21h8M22 24h8" stroke="#908020" stroke-width="1.2"/><path d="M1.5 3.5h11l9 9v17h-20z" fill="#b0eab8" stroke="#90a890"/><path d="M2 4h4v25h-4z" fill="#d8f8d8"/><path d="M12.5 3.5v9h9" fill="#fff" stroke="#90a890"/><path d="M12.5 3.5l9 9" stroke="#506050"/><rect x="10.5" y="17.5" width="10" height="10" fill="#f4fff4" stroke="#909890"/><text x="12.5" y="26" font-size="10" font-family="Liberation Sans" fill="#000">P</text></svg></div>
<div style="left:1259px;top:134px;width:16px;height:269px;background:repeating-conic-gradient(#fff 0 25%, #D4D0C8 0 50%) 0 0/2px 2px"></div>
<div style="left:1259px;top:134px;width:16px;height:16px;background:#D4D0C8;box-shadow:inset 1px 1px 0 #D4D0C8, inset 2px 2px 0 #fff, inset -1px -1px 0 #404040, inset -2px -2px 0 #808080;"><svg width="16" height="16"><path d="M4 10h7l-3.5-4z" fill="#000"/></svg></div>
<div style="left:1259px;top:150px;width:16px;height:16px;background:#D4D0C8;box-shadow:inset 1px 1px 0 #D4D0C8, inset 2px 2px 0 #fff, inset -1px -1px 0 #404040, inset -2px -2px 0 #808080;"></div>
<div style="left:1259px;top:387px;width:16px;height:16px;background:#D4D0C8;box-shadow:inset 1px 1px 0 #D4D0C8, inset 2px 2px 0 #fff, inset -1px -1px 0 #404040, inset -2px -2px 0 #808080;"><svg width="16" height="16"><path d="M4 6h7l-3.5 4z" fill="#000"/></svg></div>
<div style="left:5px;top:403px;width:1254px;height:16px;background:repeating-conic-gradient(#fff 0 25%, #D4D0C8 0 50%) 0 0/2px 2px"></div>
<div style="left:5px;top:403px;width:16px;height:16px;background:#D4D0C8;box-shadow:inset 1px 1px 0 #D4D0C8, inset 2px 2px 0 #fff, inset -1px -1px 0 #404040, inset -2px -2px 0 #808080;"><svg width="16" height="16"><path d="M10 4v7l-4-3.5z" fill="#000"/></svg></div>
<div style="left:21px;top:403px;width:16px;height:16px;background:#D4D0C8;box-shadow:inset 1px 1px 0 #D4D0C8, inset 2px 2px 0 #fff, inset -1px -1px 0 #404040, inset -2px -2px 0 #808080;"></div>
<div style="left:1243px;top:403px;width:16px;height:16px;background:#D4D0C8;box-shadow:inset 1px 1px 0 #D4D0C8, inset 2px 2px 0 #fff, inset -1px -1px 0 #404040, inset -2px -2px 0 #808080;"><svg width="16" height="16"><path d="M6 4v7l4-3.5z" fill="#000"/></svg></div>
<div style="left:1259px;top:403px;width:16px;height:16px;background:#D4D0C8"></div>
<div style="left:1px;top:420px;width:1278px;height:1px;background:#404040"></div>
<div style="left:2px;top:421px;width:55px;height:18px;background:#D4D0C8;box-shadow:inset 1px 0 0 #fff, inset -1px -1px 0 #404040, inset -2px -2px 0 #808080;border-radius:0 0 3px 3px"></div>
<div class="t" style="left:9px;top:425px;">Таблица</div>
<div style="left:57px;top:421px;width:41px;height:18px;background:#D4D0C8;box-shadow:inset 1px 0 0 #fff, inset -1px -1px 0 #404040, inset -2px -2px 0 #808080;border-radius:0 0 3px 3px"></div>
<div class="t" style="left:62px;top:425px;">МТСН</div>
<div style="left:99px;top:421px;width:111px;height:20px;background:#D4D0C8;box-shadow:inset 1px 0 0 #fff, inset -1px -1px 0 #404040, inset -2px -2px 0 #808080;border-radius:0 0 3px 3px"></div>
<div class="t" style="left:106px;top:427px;">Сокращенный вид</div>
<div style="left:209px;top:421px;width:1px;height:20px;background:#808080"></div>
<div style="left:0px;top:442px;width:1280px;height:1px;background:#808080"></div>
<div style="left:0px;top:444px;width:1280px;height:1px;background:#fff"></div>
<div style="left:2px;top:447px;width:10px;height:10px;background:#D4D0C8;box-shadow:inset 1px 1px 0 #D4D0C8, inset 2px 2px 0 #fff, inset -1px -1px 0 #404040, inset -2px -2px 0 #808080;"><svg width="10" height="10"><path d="M2 2l5 5M7 2l-5 5" stroke="#000"/></svg></div>
<div style="left:5px;top:459px;width:1px;height:282px;background:#fff"></div>
<div style="left:6px;top:459px;width:1px;height:282px;background:#808080"></div>
<div style="left:9px;top:459px;width:1px;height:282px;background:#fff"></div>
<div style="left:10px;top:459px;width:1px;height:282px;background:#808080"></div>
<div style="left:14px;top:467px;width:1264px;height:1px;background:#fff"></div>
<div style="left:14px;top:446px;width:149px;height:23px;background:#D4D0C8;box-shadow:inset 1px 1px 0 #fff, inset -1px 0 0 #404040"></div>
<div class="t" style="left:22px;top:450px;">Лимитированные затраты</div>
<div style="left:163px;top:449px;width:127px;height:18px;background:#D4D0C8;box-shadow:inset 1px 1px 0 #fff, inset -1px 0 0 #404040, inset -2px 0 0 #808080"></div>
<div class="t" style="left:169px;top:451px;">Нормативные ресурсы</div>
<div style="left:290px;top:449px;width:106px;height:18px;background:#D4D0C8;box-shadow:inset 1px 1px 0 #fff, inset -1px 0 0 #404040, inset -2px 0 0 #808080"></div>
<div class="t" style="left:296px;top:451px;">Сметные ресурсы</div>
<div style="left:396px;top:449px;width:134px;height:18px;background:#D4D0C8;box-shadow:inset 1px 1px 0 #fff, inset -1px 0 0 #404040, inset -2px 0 0 #808080"></div>
<div class="t" style="left:402px;top:451px;">Локальные переменные</div>
<div style="left:1277px;top:467px;width:1px;height:275px;background:#404040"></div>
<div style="left:14px;top:468px;width:1px;height:273px;background:#fff"></div>
<div style="left:17px;top:470px;width:27px;height:60px;background:#D4D0C8;box-shadow:inset 1px 1px 0 #fff"></div>
<div style="left:20px;top:474px;width:21px;height:1px;background:#808080"></div>
<div style="left:20px;top:475px;width:21px;height:1px;background:#fff"></div>
<div style="left:18px;top:502px;width:25px;height:1px;background:#808080"></div>
<div style="left:18px;top:503px;width:25px;height:1px;background:#fff"></div>
<div style="left:22px;top:481px;width:16px;height:16px"><svg width="16" height="16"><path d="M2 8h12M8 2v12" stroke="#3a9a9a" stroke-width="3"/></svg></div>
<div style="left:21px;top:508px;width:18px;height:16px"><svg width="18" height="16"><path d="M2 14L15 2M3 2l13 13" stroke="#e03030" stroke-width="1.6"/><path d="M2 14l4-4" stroke="#c02020" stroke-width="3"/></svg></div>
<div style="left:17px;top:529px;width:27px;height:1px;background:#808080"></div>
<div style="left:44px;top:470px;width:1233px;height:271px;background:#fff"></div>
<div style="left:44px;top:470px;width:1px;height:271px;background:#404040"></div>
<div style="left:44px;top:470px;width:1233px;height:1px;background:#404040"></div>
<div style="left:45px;top:471px;width:12px;height:18px;background:#D4D0C8;box-shadow:inset 1px 1px 0 #fff;border-right:1px solid #808080;border-bottom:1px solid #808080;box-sizing:border-box"></div>
<div style="left:57px;top:471px;width:24px;height:18px;background:#D4D0C8;box-shadow:inset 1px 1px 0 #fff;border-right:1px solid #808080;border-bottom:1px solid #808080;box-sizing:border-box"></div>
<div style="left:81px;top:471px;width:36px;height:18px;background:#D4D0C8;box-shadow:inset 1px 1px 0 #fff;border-right:1px solid #808080;border-bottom:1px solid #808080;box-sizing:border-box"></div>
<div class="t" style="left:83px;top:474px;">N°п/п</div>
<div style="left:117px;top:471px;width:71px;height:18px;background:#D4D0C8;box-shadow:inset 1px 1px 0 #fff;border-right:1px solid #808080;border-bottom:1px solid #808080;box-sizing:border-box"></div>
<div class="t" style="left:119px;top:474px;">Переменная</div>
<div style="left:188px;top:471px;width:272px;height:18px;background:#D4D0C8;box-shadow:inset 1px 1px 0 #fff;border-right:1px solid #808080;border-bottom:1px solid #808080;box-sizing:border-box"></div>
<div class="t" style="left:190px;top:474px;">Наименование</div>
<div style="left:460px;top:471px;width:81px;height:18px;background:#D4D0C8;box-shadow:inset 1px 1px 0 #fff;border-right:1px solid #808080;border-bottom:1px solid #808080;box-sizing:border-box"></div>
<div class="t" style="left:462px;top:474px;">Итог</div>
<div style="left:541px;top:471px;width:61px;height:18px;background:#D4D0C8;box-shadow:inset 1px 1px 0 #fff;border-right:1px solid #808080;border-bottom:1px solid #808080;box-sizing:border-box"></div>
<div class="t" style="left:543px;top:474px;">Тип</div>
<div style="left:602px;top:471px;width:75px;height:18px;background:#D4D0C8;box-shadow:inset 1px 1px 0 #fff;border-right:1px solid #808080;border-bottom:1px solid #808080;box-sizing:border-box"></div>
<div class="t" style="left:604px;top:474px;">Печать</div>
<div style="left:677px;top:471px;width:101px;height:18px;background:#D4D0C8;box-shadow:inset 1px 1px 0 #fff;border-right:1px solid #808080;border-bottom:1px solid #808080;box-sizing:border-box"></div>
<div class="t" style="left:679px;top:474px;">Примечание</div>
<div style="left:45px;top:489px;width:11px;height:15px;background:#D4D0C8;box-shadow:inset 1px 1px 0 #fff"></div>
<div style="left:45px;top:504px;width:12px;height:1px;background:#808080"></div>
<div style="left:57px;top:504px;width:720px;height:1px;background:#C8C8C8"></div>
<div style="left:80px;top:489px;width:1px;height:16px;background:#C8C8C8"></div>
<div style="left:116px;top:489px;width:1px;height:16px;background:#C8C8C8"></div>
<div style="left:187px;top:489px;width:1px;height:16px;background:#C8C8C8"></div>
<div style="left:459px;top:489px;width:1px;height:16px;background:#C8C8C8"></div>
<div style="left:540px;top:489px;width:1px;height:16px;background:#C8C8C8"></div>
<div style="left:601px;top:489px;width:1px;height:16px;background:#C8C8C8"></div>
<div style="left:676px;top:489px;width:1px;height:16px;background:#C8C8C8"></div>
<div style="left:777px;top:489px;width:1px;height:16px;background:#C8C8C8"></div>
<div style="left:56px;top:489px;width:1px;height:16px;background:#808080"></div>
<div style="left:81px;top:489px;width:35px;height:15px;background:#0A246A;outline:1px dotted #fff;outline-offset:-1px"></div>
<div class="t" style="left:83px;top:490px;color:#fff">ЛС1</div>
<div class="t" style="left:190px;top:490px;color:#10107a;font-weight:bold;letter-spacing:0.5px">внутренние работы</div>
<div class="t" style="left:119px;top:490px;"></div>
<div class="t" style="left:542px;top:490px;"></div>
<div class="t" style="left:603px;top:490px;"></div>
<div style="left:45px;top:505px;width:11px;height:15px;background:#D4D0C8;box-shadow:inset 1px 1px 0 #fff"></div>
<div style="left:45px;top:520px;width:12px;height:1px;background:#808080"></div>
<div style="left:57px;top:520px;width:720px;height:1px;background:#C8C8C8"></div>
<div style="left:80px;top:505px;width:1px;height:16px;background:#C8C8C8"></div>
<div style="left:116px;top:505px;width:1px;height:16px;background:#C8C8C8"></div>
<div style="left:187px;top:505px;width:1px;height:16px;background:#C8C8C8"></div>
<div style="left:459px;top:505px;width:1px;height:16px;background:#C8C8C8"></div>
<div style="left:540px;top:505px;width:1px;height:16px;background:#C8C8C8"></div>
<div style="left:601px;top:505px;width:1px;height:16px;background:#C8C8C8"></div>
<div style="left:676px;top:505px;width:1px;height:16px;background:#C8C8C8"></div>
<div style="left:777px;top:505px;width:1px;height:16px;background:#C8C8C8"></div>
<div style="left:56px;top:505px;width:1px;height:16px;background:#808080"></div>
<div class="t" style="left:83px;top:506px;">1</div>
<div class="t" style="left:190px;top:506px;">Прямые затраты</div>
<div class="t" style="left:119px;top:506px;">ПЗ</div>
<div class="t" style="left:459px;top:506px;width:77px;text-align:right">5 480,91</div>
<div class="t" style="left:542px;top:506px;">ПЗ</div>
<div class="t" style="left:603px;top:506px;">Нет</div>
<div style="left:45px;top:521px;width:11px;height:15px;background:#D4D0C8;box-shadow:inset 1px 1px 0 #fff"></div>
<div style="left:45px;top:536px;width:12px;height:1px;background:#808080"></div>
<div style="left:57px;top:536px;width:720px;height:1px;background:#C8C8C8"></div>
<div style="left:80px;top:521px;width:1px;height:16px;background:#C8C8C8"></div>
<div style="left:116px;top:521px;width:1px;height:16px;background:#C8C8C8"></div>
<div style="left:187px;top:521px;width:1px;height:16px;background:#C8C8C8"></div>
<div style="left:459px;top:521px;width:1px;height:16px;background:#C8C8C8"></div>
<div style="left:540px;top:521px;width:1px;height:16px;background:#C8C8C8"></div>
<div style="left:601px;top:521px;width:1px;height:16px;background:#C8C8C8"></div>
<div style="left:676px;top:521px;width:1px;height:16px;background:#C8C8C8"></div>
<div style="left:777px;top:521px;width:1px;height:16px;background:#C8C8C8"></div>
<div style="left:56px;top:521px;width:1px;height:16px;background:#808080"></div>
<div class="t" style="left:83px;top:522px;">2</div>
<div class="t" style="left:190px;top:522px;">Стоимость материальных ресурсов</div>
<div class="t" style="left:119px;top:522px;">СтМат</div>
<div class="t" style="left:459px;top:522px;width:77px;text-align:right">4 285,03</div>
<div class="t" style="left:542px;top:522px;">СтМат</div>
<div class="t" style="left:603px;top:522px;">Нет</div>
<div style="left:45px;top:537px;width:11px;height:15px;background:#D4D0C8;box-shadow:inset 1px 1px 0 #fff"></div>
<div style="left:45px;top:552px;width:12px;height:1px;background:#808080"></div>
<div style="left:57px;top:552px;width:720px;height:1px;background:#C8C8C8"></div>
<div style="left:80px;top:537px;width:1px;height:16px;background:#C8C8C8"></div>
<div style="left:116px;top:537px;width:1px;height:16px;background:#C8C8C8"></div>
<div style="left:187px;top:537px;width:1px;height:16px;background:#C8C8C8"></div>
<div style="left:459px;top:537px;width:1px;height:16px;background:#C8C8C8"></div>
<div style="left:540px;top:537px;width:1px;height:16px;background:#C8C8C8"></div>
<div style="left:601px;top:537px;width:1px;height:16px;background:#C8C8C8"></div>
<div style="left:676px;top:537px;width:1px;height:16px;background:#C8C8C8"></div>
<div style="left:777px;top:537px;width:1px;height:16px;background:#C8C8C8"></div>
<div style="left:56px;top:537px;width:1px;height:16px;background:#808080"></div>
<div class="t" style="left:83px;top:538px;">3</div>
<div class="t" style="left:190px;top:538px;">Стоимость материалов заказчика</div>
<div class="t" style="left:119px;top:538px;">СтМатЗак</div>
<div class="t" style="left:459px;top:538px;width:77px;text-align:right">0,00</div>
<div class="t" style="left:542px;top:538px;">СтМатЗак</div>
<div class="t" style="left:603px;top:538px;">Нет</div>
<div style="left:45px;top:553px;width:11px;height:15px;background:#D4D0C8;box-shadow:inset 1px 1px 0 #fff"></div>
<div style="left:45px;top:568px;width:12px;height:1px;background:#808080"></div>
<div style="left:57px;top:568px;width:720px;height:1px;background:#C8C8C8"></div>
<div style="left:80px;top:553px;width:1px;height:16px;background:#C8C8C8"></div>
<div style="left:116px;top:553px;width:1px;height:16px;background:#C8C8C8"></div>
<div style="left:187px;top:553px;width:1px;height:16px;background:#C8C8C8"></div>
<div style="left:459px;top:553px;width:1px;height:16px;background:#C8C8C8"></div>
<div style="left:540px;top:553px;width:1px;height:16px;background:#C8C8C8"></div>
<div style="left:601px;top:553px;width:1px;height:16px;background:#C8C8C8"></div>
<div style="left:676px;top:553px;width:1px;height:16px;background:#C8C8C8"></div>
<div style="left:777px;top:553px;width:1px;height:16px;background:#C8C8C8"></div>
<div style="left:56px;top:553px;width:1px;height:16px;background:#808080"></div>
<div class="t" style="left:83px;top:554px;">4</div>
<div class="t" style="left:190px;top:554px;">Стоимость оборудования</div>
<div class="t" style="left:119px;top:554px;">Оборуд</div>
<div class="t" style="left:459px;top:554px;width:77px;text-align:right">0,00</div>
<div class="t" style="left:542px;top:554px;">Оборуд</div>
<div class="t" style="left:603px;top:554px;">Нет</div>
<div style="left:45px;top:569px;width:11px;height:15px;background:#D4D0C8;box-shadow:inset 1px 1px 0 #fff"></div>
<div style="left:45px;top:584px;width:12px;height:1px;background:#808080"></div>
<div style="left:57px;top:584px;width:720px;height:1px;background:#C8C8C8"></div>
<div style="left:80px;top:569px;width:1px;height:16px;background:#C8C8C8"></div>
<div style="left:116px;top:569px;width:1px;height:16px;background:#C8C8C8"></div>
<div style="left:187px;top:569px;width:1px;height:16px;background:#C8C8C8"></div>
<div style="left:459px;top:569px;width:1px;height:16px;background:#C8C8C8"></div>
<div style="left:540px;top:569px;width:1px;height:16px;background:#C8C8C8"></div>
<div style="left:601px;top:569px;width:1px;height:16px;background:#C8C8C8"></div>
<div style="left:676px;top:569px;width:1px;height:16px;background:#C8C8C8"></div>
<div style="left:777px;top:569px;width:1px;height:16px;background:#C8C8C8"></div>
<div style="left:56px;top:569px;width:1px;height:16px;background:#808080"></div>
<div class="t" style="left:83px;top:570px;">5</div>
<div class="t" style="left:190px;top:570px;">Эксплуатация машин</div>
<div class="t" style="left:119px;top:570px;">ЭММ</div>
<div class="t" style="left:459px;top:570px;width:77px;text-align:right">139,44</div>
<div class="t" style="left:542px;top:570px;">ЭММ</div>
<div class="t" style="left:603px;top:570px;">Нет</div>
<div style="left:45px;top:585px;width:11px;height:15px;background:#D4D0C8;box-shadow:inset 1px 1px 0 #fff"></div>
<div style="left:45px;top:600px;width:12px;height:1px;background:#808080"></div>
<div style="left:57px;top:600px;width:720px;height:1px;background:#C8C8C8"></div>
<div style="left:80px;top:585px;width:1px;height:16px;background:#C8C8C8"></div>
<div style="left:116px;top:585px;width:1px;height:16px;background:#C8C8C8"></div>
<div style="left:187px;top:585px;width:1px;height:16px;background:#C8C8C8"></div>
<div style="left:459px;top:585px;width:1px;height:16px;background:#C8C8C8"></div>
<div style="left:540px;top:585px;width:1px;height:16px;background:#C8C8C8"></div>
<div style="left:601px;top:585px;width:1px;height:16px;background:#C8C8C8"></div>
<div style="left:676px;top:585px;width:1px;height:16px;background:#C8C8C8"></div>
<div style="left:777px;top:585px;width:1px;height:16px;background:#C8C8C8"></div>
<div style="left:56px;top:585px;width:1px;height:16px;background:#808080"></div>
<div class="t" style="left:83px;top:586px;">6</div>
<div class="t" style="left:190px;top:586px;">ЗП машинистов</div>
<div class="t" style="left:119px;top:586px;">ЗПМ</div>
<div class="t" style="left:459px;top:586px;width:77px;text-align:right">61,00</div>
<div class="t" style="left:542px;top:586px;">ЗПМ</div>
<div class="t" style="left:603px;top:586px;">Нет</div>
<div style="left:45px;top:601px;width:11px;height:15px;background:#D4D0C8;box-shadow:inset 1px 1px 0 #fff"></div>
<div style="left:45px;top:616px;width:12px;height:1px;background:#808080"></div>
<div style="left:57px;top:616px;width:720px;height:1px;background:#C8C8C8"></div>
<div style="left:80px;top:601px;width:1px;height:16px;background:#C8C8C8"></div>
<div style="left:116px;top:601px;width:1px;height:16px;background:#C8C8C8"></div>
<div style="left:187px;top:601px;width:1px;height:16px;background:#C8C8C8"></div>
<div style="left:459px;top:601px;width:1px;height:16px;background:#C8C8C8"></div>
<div style="left:540px;top:601px;width:1px;height:16px;background:#C8C8C8"></div>
<div style="left:601px;top:601px;width:1px;height:16px;background:#C8C8C8"></div>
<div style="left:676px;top:601px;width:1px;height:16px;background:#C8C8C8"></div>
<div style="left:777px;top:601px;width:1px;height:16px;background:#C8C8C8"></div>
<div style="left:56px;top:601px;width:1px;height:16px;background:#808080"></div>
<div class="t" style="left:83px;top:602px;">7</div>
<div class="t" style="left:190px;top:602px;">Основная ЗП рабочих</div>
<div class="t" style="left:119px;top:602px;">ОЗП</div>
<div class="t" style="left:459px;top:602px;width:77px;text-align:right">1 056,44</div>
<div class="t" style="left:542px;top:602px;">ОЗП</div>
<div class="t" style="left:603px;top:602px;">Нет</div>
<div style="left:45px;top:617px;width:11px;height:15px;background:#D4D0C8;box-shadow:inset 1px 1px 0 #fff"></div>
<div style="left:45px;top:632px;width:12px;height:1px;background:#808080"></div>
<div style="left:57px;top:632px;width:720px;height:1px;background:#C8C8C8"></div>
<div style="left:80px;top:617px;width:1px;height:16px;background:#C8C8C8"></div>
<div style="left:116px;top:617px;width:1px;height:16px;background:#C8C8C8"></div>
<div style="left:187px;top:617px;width:1px;height:16px;background:#C8C8C8"></div>
<div style="left:459px;top:617px;width:1px;height:16px;background:#C8C8C8"></div>
<div style="left:540px;top:617px;width:1px;height:16px;background:#C8C8C8"></div>
<div style="left:601px;top:617px;width:1px;height:16px;background:#C8C8C8"></div>
<div style="left:676px;top:617px;width:1px;height:16px;background:#C8C8C8"></div>
<div style="left:777px;top:617px;width:1px;height:16px;background:#C8C8C8"></div>
<div style="left:56px;top:617px;width:1px;height:16px;background:#808080"></div>
<div class="t" style="left:83px;top:618px;">8</div>
<div class="t" style="left:190px;top:618px;">Возврат материалов</div>
<div class="t" style="left:119px;top:618px;">ВозврМат</div>
<div class="t" style="left:459px;top:618px;width:77px;text-align:right">0,00</div>
<div class="t" style="left:542px;top:618px;">ВозврМат</div>
<div class="t" style="left:603px;top:618px;">Нет</div>
<div style="left:45px;top:633px;width:11px;height:15px;background:#D4D0C8;box-shadow:inset 1px 1px 0 #fff"></div>
<div style="left:45px;top:648px;width:12px;height:1px;background:#808080"></div>
<div style="left:57px;top:648px;width:720px;height:1px;background:#C8C8C8"></div>
<div style="left:80px;top:633px;width:1px;height:16px;background:#C8C8C8"></div>
<div style="left:116px;top:633px;width:1px;height:16px;background:#C8C8C8"></div>
<div style="left:187px;top:633px;width:1px;height:16px;background:#C8C8C8"></div>
<div style="left:459px;top:633px;width:1px;height:16px;background:#C8C8C8"></div>
<div style="left:540px;top:633px;width:1px;height:16px;background:#C8C8C8"></div>
<div style="left:601px;top:633px;width:1px;height:16px;background:#C8C8C8"></div>
<div style="left:676px;top:633px;width:1px;height:16px;background:#C8C8C8"></div>
<div style="left:777px;top:633px;width:1px;height:16px;background:#C8C8C8"></div>
<div style="left:56px;top:633px;width:1px;height:16px;background:#808080"></div>
<div class="t" style="left:83px;top:634px;">9</div>
<div class="t" style="left:190px;top:634px;">Трудозатраты строителей</div>
<div class="t" style="left:119px;top:634px;">ТрудСтр</div>
<div class="t" style="left:459px;top:634px;width:77px;text-align:right">97,52485</div>
<div class="t" style="left:542px;top:634px;">ТрудСтр</div>
<div class="t" style="left:603px;top:634px;">Нет</div>
<div style="left:45px;top:649px;width:11px;height:15px;background:#D4D0C8;box-shadow:inset 1px 1px 0 #fff"></div>
<div style="left:45px;top:664px;width:12px;height:1px;background:#808080"></div>
<div style="left:57px;top:664px;width:720px;height:1px;background:#C8C8C8"></div>
<div style="left:80px;top:649px;width:1px;height:16px;background:#C8C8C8"></div>
<div style="left:116px;top:649px;width:1px;height:16px;background:#C8C8C8"></div>
<div style="left:187px;top:649px;width:1px;height:16px;background:#C8C8C8"></div>
<div style="left:459px;top:649px;width:1px;height:16px;background:#C8C8C8"></div>
<div style="left:540px;top:649px;width:1px;height:16px;background:#C8C8C8"></div>
<div style="left:601px;top:649px;width:1px;height:16px;background:#C8C8C8"></div>
<div style="left:676px;top:649px;width:1px;height:16px;background:#C8C8C8"></div>
<div style="left:777px;top:649px;width:1px;height:16px;background:#C8C8C8"></div>
<div style="left:56px;top:649px;width:1px;height:16px;background:#808080"></div>
<div class="t" style="left:83px;top:650px;">10</div>
<div class="t" style="left:190px;top:650px;">Трудозатраты машинистов</div>
<div class="t" style="left:119px;top:650px;">ТрудМаш</div>
<div class="t" style="left:459px;top:650px;width:77px;text-align:right">4,76444</div>
<div class="t" style="left:542px;top:650px;">ТрудМаш</div>
<div class="t" style="left:603px;top:650px;">Нет</div>
<div style="left:45px;top:665px;width:11px;height:15px;background:#D4D0C8;box-shadow:inset 1px 1px 0 #fff"></div>
<div style="left:45px;top:680px;width:12px;height:1px;background:#808080"></div>
<div style="left:57px;top:680px;width:720px;height:1px;background:#C8C8C8"></div>
<div style="left:80px;top:665px;width:1px;height:16px;background:#C8C8C8"></div>
<div style="left:116px;top:665px;width:1px;height:16px;background:#C8C8C8"></div>
<div style="left:187px;top:665px;width:1px;height:16px;background:#C8C8C8"></div>
<div style="left:459px;top:665px;width:1px;height:16px;background:#C8C8C8"></div>
<div style="left:540px;top:665px;width:1px;height:16px;background:#C8C8C8"></div>
<div style="left:601px;top:665px;width:1px;height:16px;background:#C8C8C8"></div>
<div style="left:676px;top:665px;width:1px;height:16px;background:#C8C8C8"></div>
<div style="left:777px;top:665px;width:1px;height:16px;background:#C8C8C8"></div>
<div style="left:56px;top:665px;width:1px;height:16px;background:#808080"></div>
<div class="t" style="left:83px;top:666px;">11</div>
<div class="t" style="left:190px;top:666px;">Транспорт материалов</div>
<div class="t" style="left:119px;top:666px;">ТранспМат</div>
<div class="t" style="left:459px;top:666px;width:77px;text-align:right">0,00</div>
<div class="t" style="left:542px;top:666px;">ТранспМат</div>
<div class="t" style="left:603px;top:666px;">Нет</div>
<div style="left:45px;top:681px;width:11px;height:15px;background:#D4D0C8;box-shadow:inset 1px 1px 0 #fff"></div>
<div style="left:45px;top:696px;width:12px;height:1px;background:#808080"></div>
<div style="left:57px;top:696px;width:720px;height:1px;background:#C8C8C8"></div>
<div style="left:80px;top:681px;width:1px;height:16px;background:#C8C8C8"></div>
<div style="left:116px;top:681px;width:1px;height:16px;background:#C8C8C8"></div>
<div style="left:187px;top:681px;width:1px;height:16px;background:#C8C8C8"></div>
<div style="left:459px;top:681px;width:1px;height:16px;background:#C8C8C8"></div>
<div style="left:540px;top:681px;width:1px;height:16px;background:#C8C8C8"></div>
<div style="left:601px;top:681px;width:1px;height:16px;background:#C8C8C8"></div>
<div style="left:676px;top:681px;width:1px;height:16px;background:#C8C8C8"></div>
<div style="left:777px;top:681px;width:1px;height:16px;background:#C8C8C8"></div>
<div style="left:56px;top:681px;width:1px;height:16px;background:#808080"></div>
<div class="t" style="left:83px;top:682px;">12</div>
<div class="t" style="left:190px;top:682px;">Накладные расходы</div>
<div class="t" style="left:119px;top:682px;">НР</div>
<div class="t" style="left:459px;top:682px;width:77px;text-align:right">1 242,79</div>
<div class="t" style="left:542px;top:682px;"></div>
<div class="t" style="left:603px;top:682px;">Нет</div>
<div style="left:45px;top:697px;width:11px;height:15px;background:#D4D0C8;box-shadow:inset 1px 1px 0 #fff"></div>
<div style="left:45px;top:712px;width:12px;height:1px;background:#808080"></div>
<div style="left:57px;top:712px;width:720px;height:1px;background:#C8C8C8"></div>
<div style="left:80px;top:697px;width:1px;height:16px;background:#C8C8C8"></div>
<div style="left:116px;top:697px;width:1px;height:16px;background:#C8C8C8"></div>
<div style="left:187px;top:697px;width:1px;height:16px;background:#C8C8C8"></div>
<div style="left:459px;top:697px;width:1px;height:16px;background:#C8C8C8"></div>
<div style="left:540px;top:697px;width:1px;height:16px;background:#C8C8C8"></div>
<div style="left:601px;top:697px;width:1px;height:16px;background:#C8C8C8"></div>
<div style="left:676px;top:697px;width:1px;height:16px;background:#C8C8C8"></div>
<div style="left:777px;top:697px;width:1px;height:16px;background:#C8C8C8"></div>
<div style="left:56px;top:697px;width:1px;height:16px;background:#808080"></div>
<div class="t" style="left:83px;top:698px;">13</div>
<div class="t" style="left:190px;top:698px;">Сметная прибыль</div>
<div class="t" style="left:119px;top:698px;">СмПриб</div>
<div class="t" style="left:459px;top:698px;width:77px;text-align:right">691,81</div>
<div class="t" style="left:542px;top:698px;"></div>
<div class="t" style="left:603px;top:698px;">Нет</div>
<div style="left:57px;top:713px;width:720px;height:15px;background:#E0FCFC"></div>
<div style="left:45px;top:713px;width:11px;height:15px;background:#D4D0C8;box-shadow:inset 1px 1px 0 #fff"></div>
<div style="left:45px;top:728px;width:12px;height:1px;background:#808080"></div>
<div style="left:57px;top:728px;width:720px;height:1px;background:#C8C8C8"></div>
<div style="left:80px;top:713px;width:1px;height:16px;background:#C8C8C8"></div>
<div style="left:116px;top:713px;width:1px;height:16px;background:#C8C8C8"></div>
<div style="left:187px;top:713px;width:1px;height:16px;background:#C8C8C8"></div>
<div style="left:459px;top:713px;width:1px;height:16px;background:#C8C8C8"></div>
<div style="left:540px;top:713px;width:1px;height:16px;background:#C8C8C8"></div>
<div style="left:601px;top:713px;width:1px;height:16px;background:#C8C8C8"></div>
<div style="left:676px;top:713px;width:1px;height:16px;background:#C8C8C8"></div>
<div style="left:777px;top:713px;width:1px;height:16px;background:#C8C8C8"></div>
<div style="left:56px;top:713px;width:1px;height:16px;background:#808080"></div>
<div class="t" style="left:83px;top:714px;">14</div>
<div class="t" style="left:190px;top:714px;">Итого по смете</div>
<div class="t" style="left:119px;top:714px;">Итог1</div>
<div class="t" style="left:459px;top:714px;width:77px;text-align:right">5 480,91</div>
<div class="t" style="left:542px;top:714px;"></div>
<div class="t" style="left:603px;top:714px;">Да</div>
<div style="left:49px;top:491px;width:0;height:0;border-top:5px solid transparent;border-bottom:5px solid transparent;border-left:5px solid #000"></div>
<div style="left:60px;top:490px;width:16px;height:12px"><svg width="16" height="12"><path d="M1 7l7-5 7 2-6 6z" fill="#30c050"/><path d="M1 7l8 3" stroke="#208040"/></svg></div>
<div style="left:533px;top:713px;width:0;height:0;border-left:6px solid transparent;border-top:6px solid #10a030"></div>
<div style="left:1258px;top:471px;width:16px;height:267px;background:repeating-conic-gradient(#fff 0 25%, #D4D0C8 0 50%) 0 0/2px 2px"></div>
<div style="left:1258px;top:471px;width:16px;height:16px;background:#D4D0C8;box-shadow:inset 1px 1px 0 #D4D0C8, inset 2px 2px 0 #fff, inset -1px -1px 0 #404040, inset -2px -2px 0 #808080;"><svg width="16" height="16"><path d="M4 10h7l-3.5-4z" fill="#000"/></svg></div>
<div style="left:1258px;top:487px;width:16px;height:35px;background:#D4D0C8;box-shadow:inset 1px 1px 0 #D4D0C8, inset 2px 2px 0 #fff, inset -1px -1px 0 #404040, inset -2px -2px 0 #808080;"></div>
<div style="left:1258px;top:721px;width:16px;height:16px;background:#D4D0C8;box-shadow:inset 1px 1px 0 #D4D0C8, inset 2px 2px 0 #fff, inset -1px -1px 0 #404040, inset -2px -2px 0 #808080;"><svg width="16" height="16"><path d="M4 6h7l-3.5 4z" fill="#000"/></svg></div>
<div style="left:44px;top:738px;width:1234px;height:1px;background:#D4D0C8"></div>
<div style="left:44px;top:739px;width:1234px;height:1px;background:#D4D0C8"></div>
<div style="left:0px;top:740px;width:1280px;height:1px;background:#808080"></div>
<div style="left:0px;top:741px;width:1280px;height:1px;background:#404040"></div>
<div style="left:0px;top:742px;width:1280px;height:30px;background:#D4D0C8"></div>
<div style="left:89px;top:745px;width:300px;height:25px;box-shadow:inset 1px 1px 0 #808080, inset -1px -1px 0 #fff"></div>
<div style="left:391px;top:745px;width:853px;height:25px;box-shadow:inset 1px 1px 0 #808080, inset -1px -1px 0 #fff"></div>
<div style="left:1246px;top:745px;width:34px;height:25px;box-shadow:inset 1px 1px 0 #808080, inset -1px -1px 0 #fff"></div>
<div class="t" style="left:1248px;top:751px;">EN</div>
<div style="left:1264px;top:756px;width:14px;height:14px"><svg width="14" height="14"><path d="M13 2L2 13M13 6L6 13M13 10L10 13" stroke="#808080" stroke-width="1"/><path d="M13 3L3 13M13 7L7 13M13 11L11 13" stroke="#fff" stroke-width="1"/></svg></div>
<div style="left:0px;top:770px;width:1280px;height:1px;background:#fff"></div>
<div style="left:0px;top:772px;width:1280px;height:1px;background:#D4D0C8"></div>
<div class="t" style="left:1194px;top:784px;font:bold 12px 'Liberation Sans',sans-serif;color:#fff;letter-spacing:0.3px;transform:none;text-shadow:1px 0 0 #000,-1px 0 0 #000,0 1px 0 #000,0 -1px 0 #000,1px 1px 0 #000,-1px -1px 0 #000,1px -1px 0 #000,-1px 1px 0 #000">CMET4UK.RU</div>
</body></html>
